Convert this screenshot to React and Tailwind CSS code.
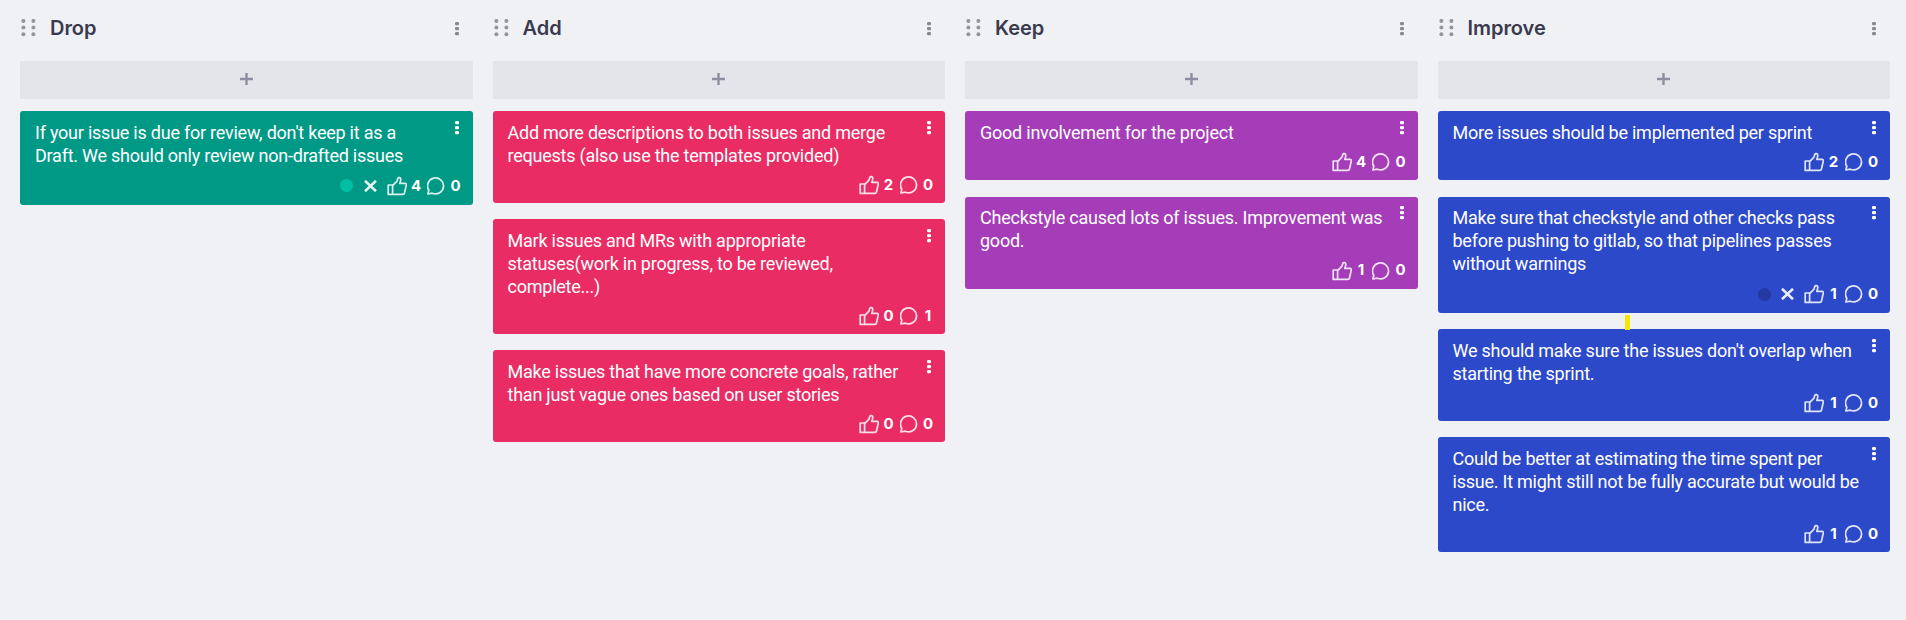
const THUMB = "M1.200 9h4.400v9.400H1.200zM5.600 9.600 9.800 5.400 10.800 2.400C11.300 1 13.800 1.300 13.800 3.300c0 1.500-.6 2.800-1 4.100h5.300c1 0 1.400.7 1.200 1.600l-1.800 8c-.2.900-.7 1.400-1.600 1.400H5.600";

const dots = [0, 5, 10];

function Kebab({ className }) {
  return (
    <svg width="4" height="14" viewBox="0 0 4 14" fill="currentColor" className={className}>
      {dots.map((y) => (
        <rect key={y} x="0" y={y} width="4" height="3.200" rx="1.200" />
      ))}
    </svg>
  );
}

function Grip() {
  return (
    <svg width="16" height="18" viewBox="0 0 16 18" className="ml-px shrink-0 text-[#969696]" fill="currentColor">
      {[2.4, 12.4].map((x) =>
        [1.9, 8.6, 15.3].map((y) => <circle key={x + "-" + y} cx={x} cy={y} r="2" />)
      )}
    </svg>
  );
}

function Card({ color, dot, lines, likes, comments }) {
  return (
    <article className={`rounded-[3px] text-white ${color}`}>
      <div className="flex justify-between pt-[9.900px] pr-[14px] pl-[15px]">
        <p className="pt-px font-['Roboto',sans-serif] text-[18px] leading-[22.7px] tracking-[-0.235px] whitespace-nowrap">
          {lines.map((l) => (
            <span key={l} className="block">{l}</span>
          ))}
        </p>
        <Kebab className="shrink-0" />
      </div>
      <div className={`flex items-center justify-end pr-3 font-['Inter',sans-serif] text-[15px] font-bold ${dot ? "h-[37.3px]" : "h-[35.7px]"}`}>
        {dot && (
          <>
            <span className={`mr-[10.500px] size-[13px] rounded-full ${dot}`} />
            <svg width="13" height="12" viewBox="0 0 13 12" className="mr-[10px]" stroke="currentColor" strokeOpacity="0.9" strokeWidth="2.600">
              <path d="M1 .8 12 11.200M12 .8 1 11.200" />
            </svg>
          </>
        )}
        <svg width="20" height="20" viewBox="0 0 20 20" fill="none" stroke="currentColor" strokeOpacity="0.85" strokeWidth="1.700" strokeLinejoin="round">
          <path d={THUMB} />
        </svg>
        <span className="ml-[4.500px] w-[10px] text-center">{likes}</span>
        <svg width="18" height="18" viewBox="0 0 18 18" className="ml-[6px]" fill="none" stroke="currentColor" strokeOpacity="0.85" strokeWidth="1.700" strokeLinejoin="round">
          <path d="M.9 17 1.800 13.200A8 8 0 1 1 5.300 16.200Z" />
        </svg>
        <span className="ml-[5.500px] w-[10px] text-center">{comments}</span>
      </div>
    </article>
  );
}

const columns = [
  {
    title: "Drop",
    color: "bg-[#009986]",
    cards: [
      { lines: ["If your issue is due for review, don't keep it as a", "Draft. We should only review non-drafted issues"], likes: 4, comments: 0, dot: "bg-[#00bfa5]" },
    ],
  },
  {
    title: "Add",
    color: "bg-[#ea2c64]",
    cards: [
      { lines: ["Add more descriptions to both issues and merge", "requests (also use the templates provided)"], likes: 2, comments: 0 },
      { lines: ["Mark issues and MRs with appropriate", "statuses(work in progress, to be reviewed,", "complete...)"], likes: 0, comments: 1 },
      { lines: ["Make issues that have more concrete goals, rather", "than just vague ones based on user stories"], likes: 0, comments: 0 },
    ],
  },
  {
    title: "Keep",
    color: "bg-[#a53cb8]",
    cards: [
      { lines: ["Good involvement for the project"], likes: 4, comments: 0 },
      { lines: ["Checkstyle caused lots of issues. Improvement was", "good."], likes: 1, comments: 0 },
    ],
  },
  {
    title: "Improve",
    color: "bg-[#2c49ca]",
    cards: [
      { lines: ["More issues should be implemented per sprint"], likes: 2, comments: 0 },
      { lines: ["Make sure that checkstyle and other checks pass", "before pushing to gitlab, so that pipelines passes", "without warnings"], likes: 1, comments: 0, dot: "bg-[#243aa1]" },
      { lines: ["We should make sure the issues don't overlap when", "starting the sprint."], likes: 1, comments: 0, marker: true },
      { lines: ["Could be better at estimating the time spent per", "issue. It might still not be fully accurate but would be", "nice."], likes: 1, comments: 0 },
    ],
  },
];

export default function App() {
  return (
    <main className="grid h-[620px] grid-cols-4 gap-5 bg-[#f0f1f5] pr-4 pl-5">
      {columns.map((c) => (
        <section key={c.title} className="flex min-w-0 flex-col">
          <header className="flex h-[61px] items-center pr-[14px] pb-[5px]">
            <Grip />
            <h2 className="ml-[13px] flex-1 font-['Inter',sans-serif] text-[20px] font-semibold tracking-[-0.05px] text-[#3a3a4f]">{c.title}</h2>
            <Kebab className="mt-[2px] text-[#8a8a8a]" />
          </header>
          <button className="flex h-[38px] shrink-0 items-center justify-center bg-[#e4e5ea] pb-[2px] text-[#8f8ea0]">
            <svg width="13" height="12" viewBox="0 0 13 12" stroke="currentColor" strokeWidth="2.400">
              <path d="M0 6h13M6.500 0v12" />
            </svg>
          </button>
          <div className="mt-3 flex flex-col gap-[16.25px]">
            {c.cards.map((card) => (
              <div key={card.lines[0]} className="relative">
                {card.marker && <span className="absolute -top-[14px] left-[187px] h-[15px] w-[5px] bg-[#f3e600]" />}
                <Card {...card} color={c.color} />
              </div>
            ))}
          </div>
        </section>
      ))}
    </main>
  );
}
